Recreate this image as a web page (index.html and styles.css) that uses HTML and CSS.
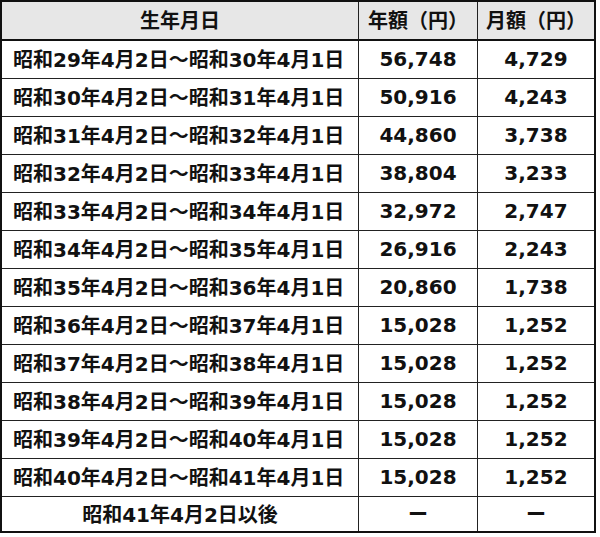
FILE: index.html
```html
<!DOCTYPE html>
<html lang="ja">
<head>
<meta charset="utf-8">
<link rel="stylesheet" href="styles.css">
</head>
<body>
<div class="sheet">
  <div class="cell head">生年月日</div>
  <div class="cell head">年額（円）</div>
  <div class="cell head last-col">月額（円）</div>

  <div class="cell label">昭和29年4月2日～昭和30年4月1日</div>
  <div class="cell num">56,748</div>
  <div class="cell num last-col">4,729</div>

  <div class="cell label">昭和30年4月2日～昭和31年4月1日</div>
  <div class="cell num">50,916</div>
  <div class="cell num last-col">4,243</div>

  <div class="cell label">昭和31年4月2日～昭和32年4月1日</div>
  <div class="cell num">44,860</div>
  <div class="cell num last-col">3,738</div>

  <div class="cell label">昭和32年4月2日～昭和33年4月1日</div>
  <div class="cell num">38,804</div>
  <div class="cell num last-col">3,233</div>

  <div class="cell label">昭和33年4月2日～昭和34年4月1日</div>
  <div class="cell num">32,972</div>
  <div class="cell num last-col">2,747</div>

  <div class="cell label">昭和34年4月2日～昭和35年4月1日</div>
  <div class="cell num">26,916</div>
  <div class="cell num last-col">2,243</div>

  <div class="cell label">昭和35年4月2日～昭和36年4月1日</div>
  <div class="cell num">20,860</div>
  <div class="cell num last-col">1,738</div>

  <div class="cell label">昭和36年4月2日～昭和37年4月1日</div>
  <div class="cell num">15,028</div>
  <div class="cell num last-col">1,252</div>

  <div class="cell label">昭和37年4月2日～昭和38年4月1日</div>
  <div class="cell num">15,028</div>
  <div class="cell num last-col">1,252</div>

  <div class="cell label">昭和38年4月2日～昭和39年4月1日</div>
  <div class="cell num">15,028</div>
  <div class="cell num last-col">1,252</div>

  <div class="cell label">昭和39年4月2日～昭和40年4月1日</div>
  <div class="cell num">15,028</div>
  <div class="cell num last-col">1,252</div>

  <div class="cell label">昭和40年4月2日～昭和41年4月1日</div>
  <div class="cell num">15,028</div>
  <div class="cell num last-col">1,252</div>

  <div class="cell center last-row">昭和41年4月2日以後</div>
  <div class="cell num last-row">ー</div>
  <div class="cell num last-col last-row">ー</div>
</div>
</body>
</html>
```

FILE: styles.css
```css
html, body {
  margin: 0;
  padding: 0;
  background: #ffffff;
}

.sheet {
  width: 596px;
  box-sizing: border-box;
  border: 2px solid #111;
  display: grid;
  grid-template-columns: 357px 119px 116px;
  grid-template-rows: 39px repeat(12, 38px) 34px;
  font-family: "DejaVu Sans", "Noto Sans CJK JP", sans-serif;
  font-weight: bold;
  font-size: 20px;
  color: #111;
}

.cell {
  box-sizing: border-box;
  display: flex;
  align-items: center;
  border-right: 1px solid #222;
  border-bottom: 1px solid #222;
  white-space: nowrap;
  padding-bottom: 2px;
}

.head {
  background: #e7e7e7;
  justify-content: center;
  border-bottom: 2px solid #111;
}

.label {
  justify-content: flex-start;
  padding-left: 11px;
}

.num,
.center {
  justify-content: center;
}

.last-col {
  border-right: none;
}

.last-row {
  border-bottom: none;
}
```
